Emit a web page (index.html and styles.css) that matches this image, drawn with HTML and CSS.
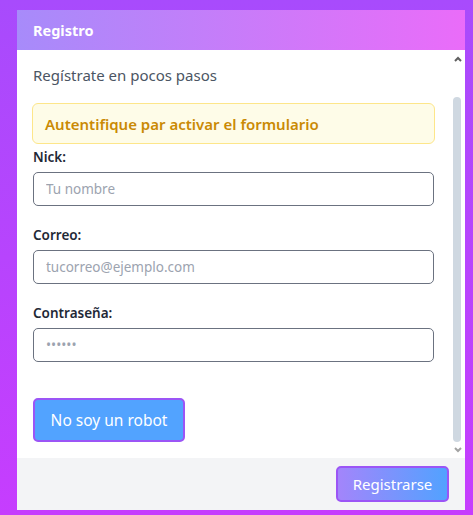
FILE: index.html
```html
<!DOCTYPE html>
<html lang="es">
<head>
<meta charset="utf-8">
<title>Registro</title>
<link rel="stylesheet" href="styles.css">
</head>
<body>
<div class="card">
  <div class="card-header">Registro</div>
  <div class="card-body">
    <div class="content">
      <p class="subtitle">Regístrate en pocos pasos</p>
      <div class="alert">Autentifique par activar el formulario</div>
      <div class="field">
        <label class="label" for="nick">Nick:</label>
        <input class="input" id="nick" type="text" placeholder="Tu nombre">
      </div>
      <div class="field">
        <label class="label" for="correo">Correo:</label>
        <input class="input" id="correo" type="email" placeholder="tucorreo@ejemplo.com">
      </div>
      <div class="field">
        <label class="label" for="pass">Contraseña:</label>
        <input class="input" id="pass" type="password" placeholder="••••••">
      </div>
      <button class="btn-robot" type="button">No soy un robot</button>
    </div>
    <div class="scrollbar">
      <div class="sb-btn">
        <svg width="8" height="6" viewBox="0 0 8 6"><path d="M1 5 L4 2 L7 5" fill="none" stroke="#5f5f5f" stroke-width="2"/></svg>
      </div>
      <div class="sb-space"></div>
      <div class="sb-thumb"></div>
      <div class="sb-btn sb-down">
        <svg width="8" height="6" viewBox="0 0 8 6"><path d="M1 1 L4 4 L7 1" fill="none" stroke="#a3a3a3" stroke-width="2"/></svg>
      </div>
    </div>
  </div>
  <div class="card-footer">
    <button class="btn-submit" type="button">Registrarse</button>
  </div>
</div>
</body>
</html>
```
FILE: styles.css
```css
* { box-sizing: border-box; }
html, body { margin: 0; height: 515px; }
body {
  padding: 10px 8px 5px 17px;
  background: linear-gradient(to bottom, #a84bfc, #c63dfe);
  font-family: "Noto Sans", "Open Sans", sans-serif;
  overflow: hidden;
}
.card {
  width: 448px;
  height: 500px;
  display: flex;
  flex-direction: column;
  background: #fff;
}
.card-header {
  height: 40px;
  flex: none;
  display: flex;
  align-items: center;
  padding-left: 16px;
  color: #fff;
  font-weight: 700;
  font-size: 14.5px;
  background: linear-gradient(to right, #a78bfa, #ea6cf9);
}
.card-body {
  height: 408px;
  flex: none;
  display: flex;
  background: #fff;
}
.content {
  flex: 1;
  padding: 14px 16px 16px 16px;
  display: flex;
  flex-direction: column;
  align-items: flex-start;
}
.subtitle {
  margin: 0;
  line-height: 22px;
  font-size: 15px;
  color: #4b5563;
}
.alert {
  align-self: stretch;
  margin: 17px -1px 0 -1px;
  height: 41px;
  border: 1px solid #fde68a;
  border-radius: 6px;
  background: #fefce8;
  color: #ca8a04;
  font-weight: 600;
  font-size: 15px;
  padding-left: 12px;
  display: flex;
  align-items: center;
}
.field {
  align-self: stretch;
  display: flex;
  flex-direction: column;
  margin-top: 20px;
}
.alert + .field { margin-top: 4px; }
.label {
  line-height: 18px;
  height: 18px;
  font-size: 13.5px;
  font-weight: 600;
  color: #1f2937;
  margin-bottom: 6px;
}
.input {
  height: 34px;
  border: 1px solid #6b7280;
  border-radius: 5px;
  padding: 0 12px;
  font-family: inherit;
  font-size: 13.5px;
  color: #1f2937;
  outline: none;
}
.input::placeholder { color: #9ca3af; }
.btn-robot {
  margin-top: 36px;
  width: 152px;
  height: 44px;
  border: 2px solid #9b55f6;
  border-radius: 5px;
  background: #52a3ff;
  color: #fff;
  font-family: inherit;
  font-size: 15.5px;
  padding: 0;
}
.scrollbar {
  width: 15px;
  flex: none;
  display: flex;
  flex-direction: column;
}
.sb-btn {
  height: 17px;
  display: flex;
  align-items: center;
  justify-content: center;
}
.sb-down { height: 16px; }
.sb-space { flex: 1; }
.sb-thumb {
  height: 345px;
  width: 8px;
  margin-left: 3px;
  border-radius: 4px;
  background: #cfd8e1;
}
.card-footer {
  flex: 1;
  background: #f3f4f6;
  display: flex;
  justify-content: flex-end;
  align-items: center;
  padding-right: 16px;
}
.btn-submit {
  width: 113px;
  height: 36px;
  border: 2px solid #9b55f6;
  border-radius: 5px;
  background: linear-gradient(to right, #a385fb, #52a2ff);
  color: #fff;
  font-family: inherit;
  font-size: 15px;
  padding: 0;
}
```
